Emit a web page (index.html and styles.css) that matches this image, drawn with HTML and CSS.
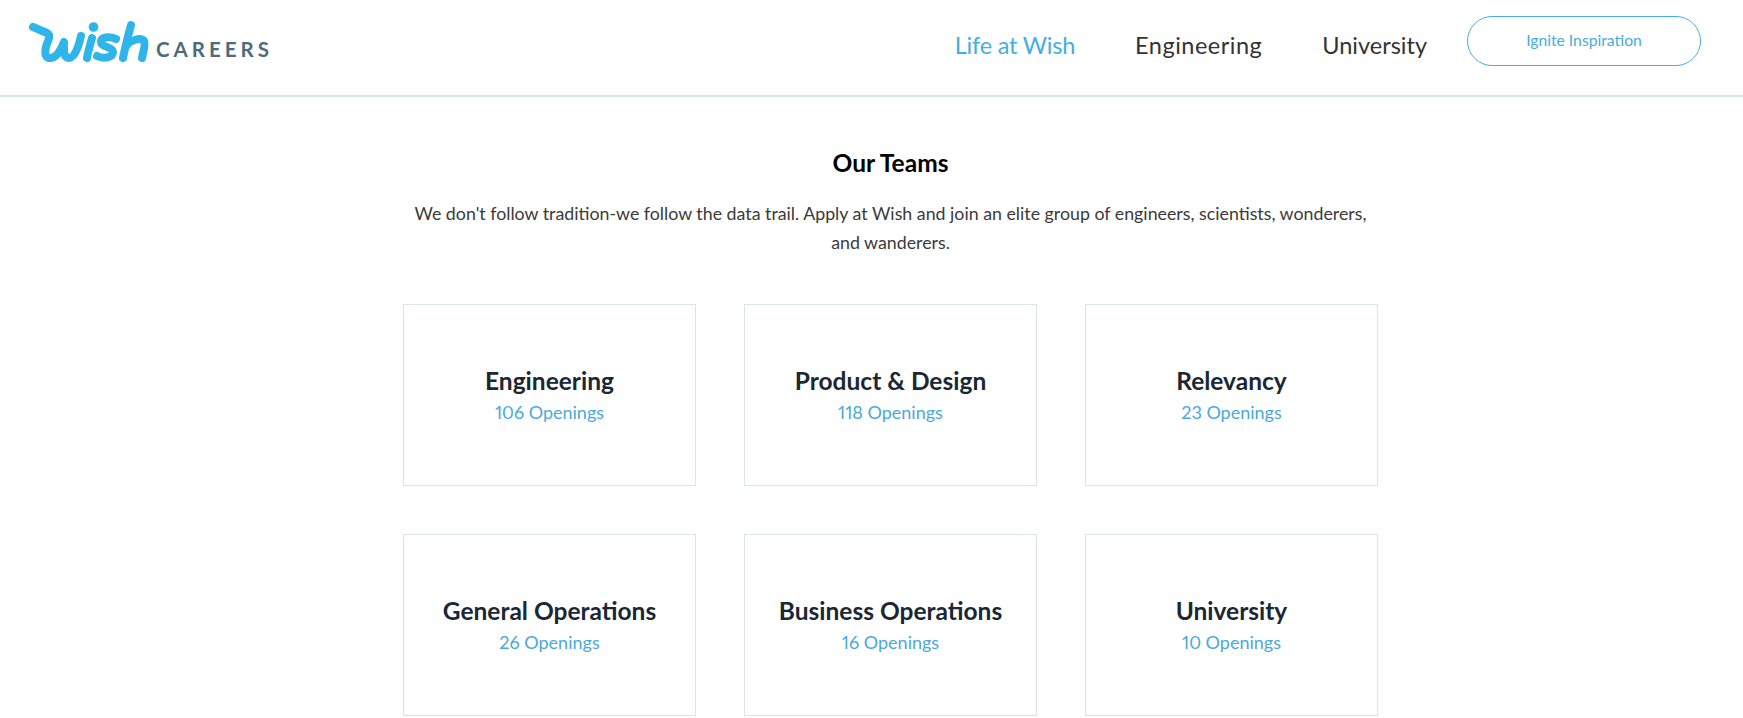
FILE: index.html
```html
<!DOCTYPE html>
<html lang="en">
<head>
<meta charset="utf-8">
<title>Wish Careers</title>
<link rel="stylesheet" href="styles.css">
</head>
<body>
<header class="topbar">
  <a class="brand" href="#">
    <svg class="brand-mark" viewBox="0 0 126 48" width="126" height="48" aria-label="wish">
      <g fill="none" stroke="#2fb5ea" stroke-width="8" stroke-linecap="round" stroke-linejoin="round">
        <path d="M5 9 L19 15 C23 17 21 20 20 23 C17 30 15 40 22 40 C29 40 33 32 36 24 C36 32 35 40 41 40 C47 40 51 27 53 18"/>
        <path d="M64 20 C62 27 60 34 59 40"/>
        <path d="M88 21 C81 18 73 19 73 24 C73 30 85 28 85 34 C85 40 75 41 69 38"/>
        <path d="M103 7 C100 18 97 30 95 40"/>
        <path d="M98 28 C102 22 113 19 116 23 C118 26 115 34 114 40"/>
      </g>
      <circle cx="65.500" cy="9" r="4.800" fill="#2fb5ea"/>
    </svg>
    <span class="brand-text">CAREERS</span>
  </a>
  <nav class="nav">
    <a class="nav-link nav-link-active" href="#">Life at Wish</a>
    <a class="nav-link nav-link-mid" href="#">Engineering</a>
    <a class="nav-link nav-link-last" href="#">University</a>
    <a class="nav-button" href="#">Ignite Inspiration</a>
  </nav>
</header>
<main class="teams">
  <h1 class="teams-title">Our Teams</h1>
  <p class="teams-intro">We don't follow tradition-we follow the data trail. Apply at Wish and join an elite group of engineers, scientists, wonderers, and wanderers.</p>
  <div class="team-grid">
    <a class="team-card" href="#"><span class="team-name">Engineering</span><span class="team-count">106 Openings</span></a>
    <a class="team-card" href="#"><span class="team-name">Product &amp; Design</span><span class="team-count">118 Openings</span></a>
    <a class="team-card" href="#"><span class="team-name">Relevancy</span><span class="team-count">23 Openings</span></a>
    <a class="team-card" href="#"><span class="team-name">General Operations</span><span class="team-count">26 Openings</span></a>
    <a class="team-card" href="#"><span class="team-name">Business Operations</span><span class="team-count">16 Openings</span></a>
    <a class="team-card" href="#"><span class="team-name">University</span><span class="team-count">10 Openings</span></a>
  </div>
</main>
</body>
</html>
```
FILE: styles.css
```css
* { box-sizing: border-box; }
html, body { margin: 0; padding: 0; background: #fff; }
body { font-family: "Lato", "Liberation Sans", sans-serif; color: #2a2a2a; overflow: hidden; height: 718px; }
a { text-decoration: none; color: inherit; }
.topbar { height: 97px; border-bottom: 2px solid #d5e5ec; display: flex; justify-content: space-between; padding: 0 42px 0 28px; }
.brand { display: flex; align-items: flex-start; padding-top: 18px; }
.brand-mark { display: block; }
.brand-text { font-size: 20.500px; font-weight: 700; letter-spacing: 4px; color: #4f6b7b; margin: 19px 0 0 2px; line-height: 24px; }
.nav { display: flex; align-items: flex-start; padding-top: 16px; }
.nav-link { font-size: 23.500px; line-height: 28px; margin: 15px 60px 0 0; color: #333; }
.nav-link-active { color: #45aee0; letter-spacing: -0.200px; }
.nav-link-mid { letter-spacing: 0.500px; }
.nav-link-last { margin-right: 40px; }
.nav-button { width: 234px; height: 50px; border: 1px solid #45aee0; border-radius: 25px; color: #45aee0; font-size: 15.700px; text-align: center; line-height: 46px; }
.teams { width: 975px; margin-left: 403px; display: flex; flex-direction: column; align-items: center; }
.teams-title { margin: 50px 0 0; font-size: 24.500px; line-height: 32px; font-weight: 700; color: #000; }
.teams-intro { margin: 20px 0 0; width: 975px; font-size: 17.800px; line-height: 29px; text-align: center; color: #3a3a3a; }
.team-grid { margin-top: 47px; width: 100%; display: grid; grid-template-columns: repeat(3, 293px); grid-auto-rows: 182px; column-gap: 48px; row-gap: 48px; }
.team-card { border: 1px solid #d8e5ec; display: flex; flex-direction: column; align-items: center; padding-top: 60px; }
.team-name { font-size: 24.500px; line-height: 32px; font-weight: 700; color: #1b2733; }
.team-count { font-size: 18px; line-height: 28px; color: #4aa9dd; margin-top: 1px; font-variant-numeric: proportional-nums; }
```
